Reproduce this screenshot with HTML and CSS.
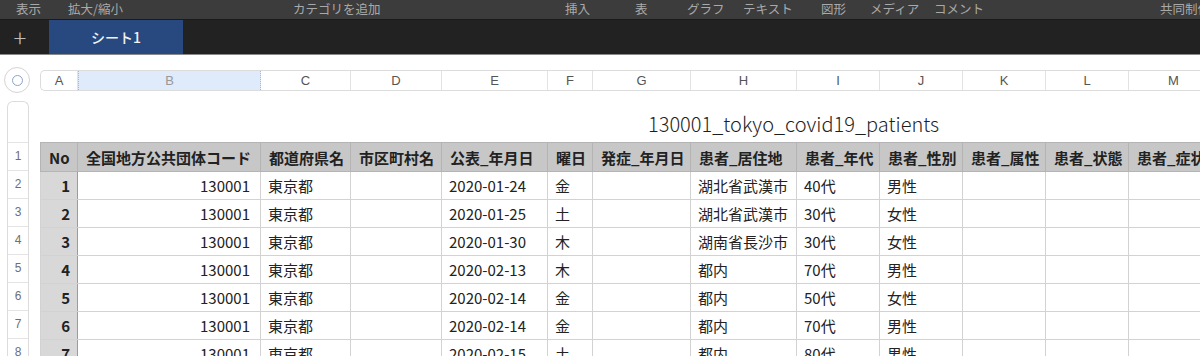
FILE: index.html
```html
<!DOCTYPE html>
<html lang="ja">
<head>
    <meta charset="UTF-8">
    <title>130001_tokyo_covid19_patients</title>
    <link rel="stylesheet" href="styles.css">
</head>
<body>
    <div class="menubar">
        <span>表示</span>
        <span>拡大/縮小</span>
        <span>カテゴリを追加</span>
        <span>挿入</span>
        <span>表</span>
        <span>グラフ</span>
        <span>テキスト</span>
        <span>図形</span>
        <span>メディア</span>
        <span>コメント</span>
        <span>共同制作</span>
    </div>

    <div class="tabbar">
        <div class="add-sheet">+</div>
        <div class="sheet-tab">シート1</div>
    </div>

    <div class="colbar">
        <div class="select-all"><span></span></div>
        <div class="col-letters">
            <div class="col w-a">A</div>
            <div class="col w-b selected">B</div>
            <div class="col w-c">C</div>
            <div class="col w-d">D</div>
            <div class="col w-e">E</div>
            <div class="col w-f">F</div>
            <div class="col w-g">G</div>
            <div class="col w-h">H</div>
            <div class="col w-i">I</div>
            <div class="col w-j">J</div>
            <div class="col w-k">K</div>
            <div class="col w-l">L</div>
            <div class="col w-m">M</div>
        </div>
    </div>

    <div class="sheet">
        <div class="rowhead">
            <div class="rh title-rh"></div>
            <div class="rh">1</div>
            <div class="rh">2</div>
            <div class="rh">3</div>
            <div class="rh">4</div>
            <div class="rh">5</div>
            <div class="rh">6</div>
            <div class="rh">7</div>
            <div class="rh">8</div>
        </div>

        <div class="content">
            <div class="table-title">130001_tokyo_covid19_patients</div>
            <table class="data">
                <colgroup>
                    <col class="w-a"><col class="w-b"><col class="w-c"><col class="w-d">
                    <col class="w-e"><col class="w-f"><col class="w-g"><col class="w-h">
                    <col class="w-i"><col class="w-j"><col class="w-k"><col class="w-l"><col class="w-m">
                </colgroup>
                <thead>
                    <tr>
                        <th>No</th>
                        <th>全国地方公共団体コード</th>
                        <th>都道府県名</th>
                        <th>市区町村名</th>
                        <th>公表_年月日</th>
                        <th>曜日</th>
                        <th>発症_年月日</th>
                        <th>患者_居住地</th>
                        <th>患者_年代</th>
                        <th>患者_性別</th>
                        <th>患者_属性</th>
                        <th>患者_状態</th>
                        <th>患者_症状</th>
                    </tr>
                </thead>
                <tbody id="rows"></tbody>
            </table>
        </div>
    </div>

    <script>
        // 患者データ（先頭の数行）
        const patients = [
            [1, '130001', '東京都', '', '2020-01-24', '金', '', '湖北省武漢市', '40代', '男性'],
            [2, '130001', '東京都', '', '2020-01-25', '土', '', '湖北省武漢市', '30代', '女性'],
            [3, '130001', '東京都', '', '2020-01-30', '木', '', '湖南省長沙市', '30代', '女性'],
            [4, '130001', '東京都', '', '2020-02-13', '木', '', '都内', '70代', '男性'],
            [5, '130001', '東京都', '', '2020-02-14', '金', '', '都内', '50代', '女性'],
            [6, '130001', '東京都', '', '2020-02-14', '金', '', '都内', '70代', '男性'],
            [7, '130001', '東京都', '', '2020-02-15', '土', '', '都内', '80代', '男性']
        ];

        const tbody = document.getElementById('rows');
        patients.forEach(p => {
            const tr = document.createElement('tr');
            tr.innerHTML = `
                <td class="no">${p[0]}</td>
                <td class="num">${p[1]}</td>
                <td>${p[2]}</td>
                <td>${p[3]}</td>
                <td>${p[4]}</td>
                <td>${p[5]}</td>
                <td>${p[6]}</td>
                <td>${p[7]}</td>
                <td>${p[8]}</td>
                <td>${p[9]}</td>
                <td></td>
                <td></td>
                <td></td>
            `;
            tbody.appendChild(tr);
        });
    </script>
</body>
</html>
```

FILE: styles.css
```css
body {
    margin: 0;
    width: 1200px;
    height: 356px;
    overflow: hidden;
    background-color: #ffffff;
    font-family: "Noto Sans CJK JP", "Noto Sans", sans-serif;
    color: #222;
}

/* 上のメニュー */
.menubar {
    height: 19px;
    background-color: #3c3c3c;
    border-bottom: 1px solid #1a1a1a;
    display: grid;
    grid-template-columns: 52px 225px 272px 70px 52px 56px 78px 49px 64px 226px auto;
    padding-left: 16px;
    font-size: 12.5px;
    line-height: 17px;
    color: #a9a9a9;
    white-space: nowrap;
    overflow: hidden;
}

.tabbar {
    height: 34px;
    background-color: #222222;
    border-bottom: 1px solid #8a8a8a;
    display: flex;
}
.add-sheet {
    width: 40px;
    text-align: center;
    color: #bdbdbd;
    font-size: 24px;
    font-weight: 300;
    line-height: 34px;
}
.sheet-tab {
    width: 134px;
    margin-left: 9px;
    background-color: #28497f;
    color: #f2f2f2;
    font-size: 14px;
    font-weight: 500;
    text-align: center;
    line-height: 34px;
}

/* 列ヘッダ */
.colbar {
    display: flex;
    align-items: center;
    margin-top: 12px;
    height: 26px;
}
.select-all {
    flex: none;
    width: 24px;
    height: 24px;
    margin-left: 4px;
    border: 1px solid #d4d4d4;
    border-radius: 50%;
    display: flex;
    align-items: center;
    justify-content: center;
}
.select-all span {
    width: 9px;
    height: 9px;
    border: 1px solid #8aa2c8;
    border-radius: 50%;
}
.col-letters {
    flex: none;
    display: flex;
    margin-left: 10px;
    height: 19px;
    border: 1px solid #dcdcdc;
    border-right: none;
    border-radius: 5px 0 0 5px;
    font-family: "Liberation Sans", sans-serif;
    font-size: 13px;
    color: #555;
}
.col {
    border-right: 1px solid #e2e2e2;
    text-align: center;
    line-height: 19px;
    box-sizing: border-box;
    flex: none;
}
.col.selected {
    background-color: #dfeafb;
    color: #999;
    border-left: 1px dotted #a8b8d0;
    border-right: 1px dotted #a8b8d0;
}

.w-a { width: 37px; }
.w-b { width: 183px; }
.w-c { width: 90px; }
.w-d { width: 91px; }
.w-e { width: 106px; }
.w-f { width: 45px; }
.w-g { width: 98px; }
.w-h { width: 106px; }
.w-i { width: 83px; }
.w-j { width: 83px; }
.w-k { width: 83px; }
.w-l { width: 83px; }
.w-m { width: 90px; }

/* 行ヘッダと表 */
.sheet {
    display: flex;
    margin-top: 8px;
}
.rowhead {
    width: 22px;
    margin-left: 7px;
    border: 1px solid #dcdcdc;
    border-bottom: none;
    border-radius: 6px 6px 0 0;
    box-sizing: border-box;
    flex: none;
}
.rh {
    height: 28px;
    border-top: 1px solid #e4e4e4;
    box-sizing: border-box;
    text-align: center;
    font-family: "Liberation Sans", sans-serif;
    font-size: 12px;
    line-height: 27px;
    color: #6f6f6f;
}
.rh.title-rh {
    height: 40px;
    border-top: none;
}

.content {
    margin-left: 11px;
    flex: none;
}
.table-title {
    height: 41px;
    padding-left: 608px;
    font-size: 20px;
    font-weight: 300;
    line-height: 46px;
    color: #1e1e1e;
    white-space: nowrap;
}

.data {
    border-collapse: collapse;
    table-layout: fixed;
    width: 1085px;
}
.data th,
.data td {
    height: 27px;
    padding: 0 7px;
    border: 1px solid #d2d2d2;
    font-size: 15px;
    text-align: left;
    white-space: nowrap;
    overflow: hidden;
}
.data th {
    height: 28px;
    background-color: #c7c7c7;
    border-color: #b4b4b4;
    font-weight: bold;
    padding-left: 8px;
}
.data td.no {
    background-color: #d8d8d8;
    border-right: 1px solid #9c9c9c;
    font-weight: bold;
    text-align: right;
    padding-right: 7px;
}
.data td.num {
    text-align: right;
    padding-right: 10px;
}
```
